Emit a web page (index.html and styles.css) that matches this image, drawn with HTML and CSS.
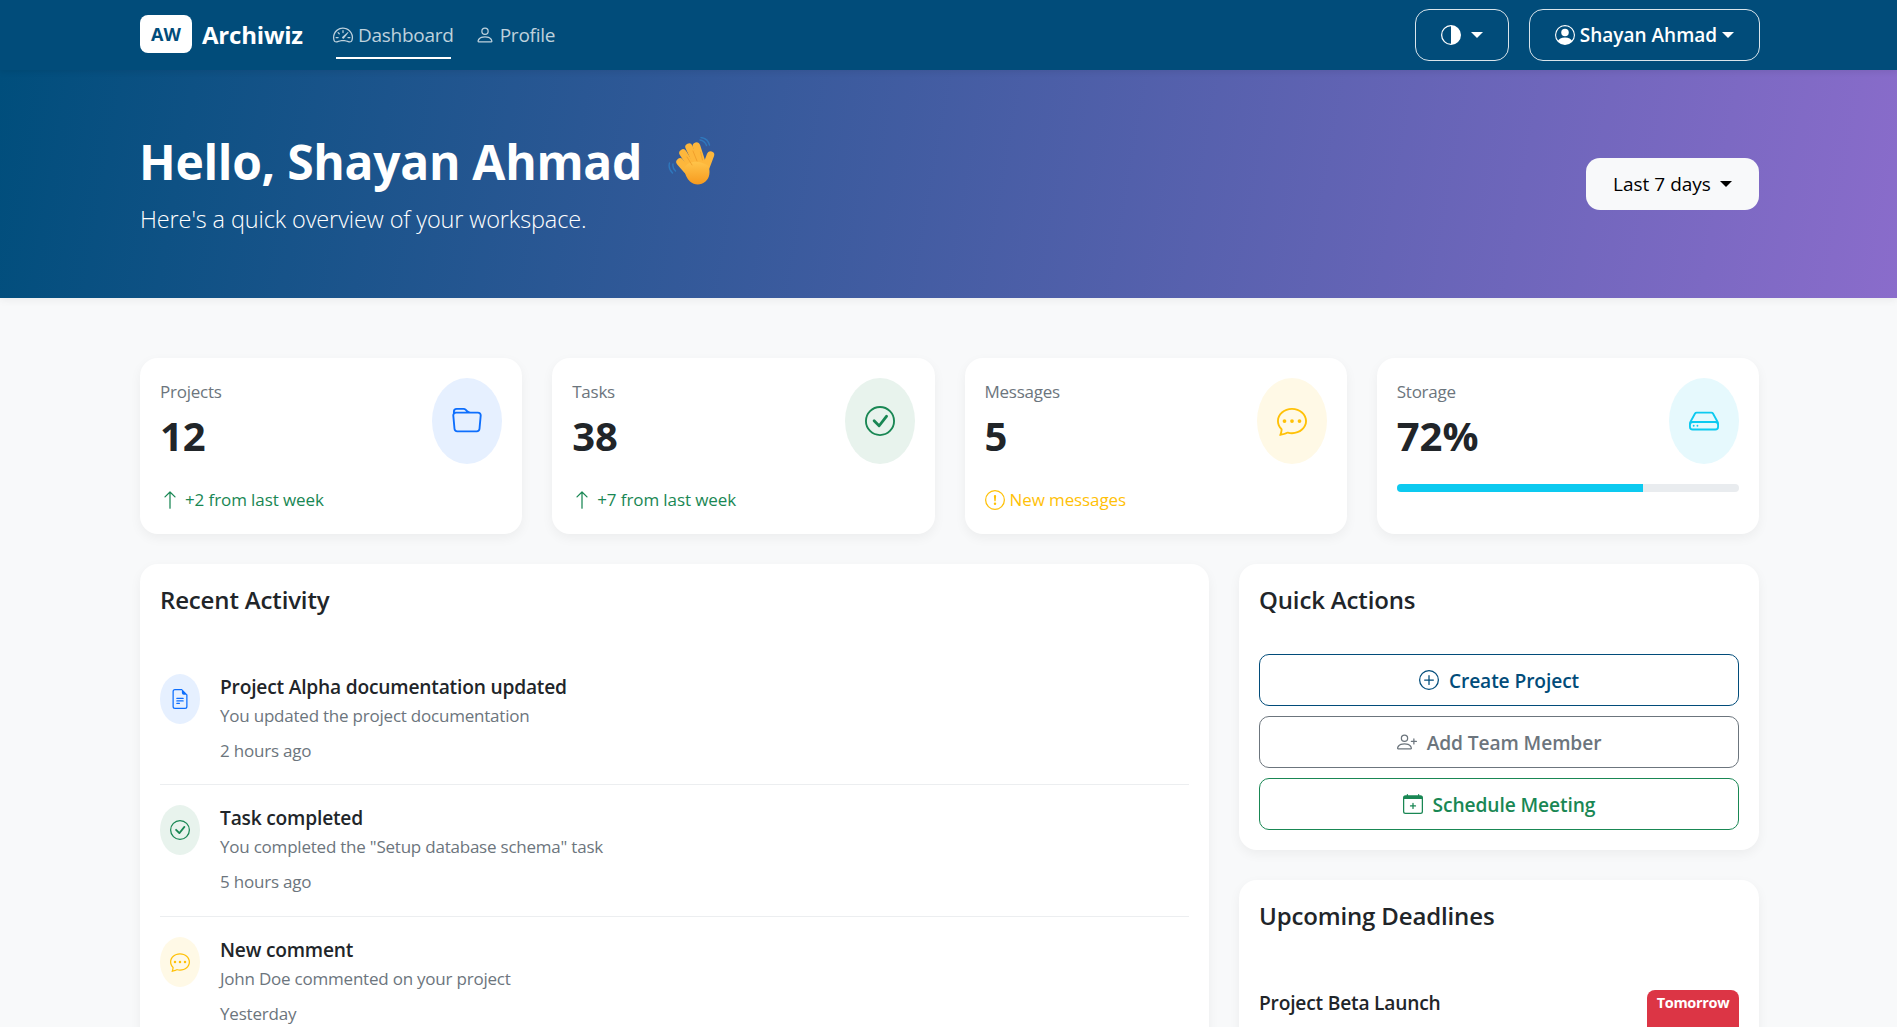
FILE: index.html
```html
<!DOCTYPE html>
<html>
<head>
<meta name="viewport" content="width=device-width, initial-scale=1">
<title>Archiwiz</title>
<link rel="stylesheet" href="styles.css">
</head>
<body>
<div class="page">

  <nav class="topnav">
    <div class="wrap topnav-row">
      <a class="brand" href="#"><span class="logo">AW</span>Archiwiz</a>
      <a class="navlink active" href="#">
        <svg class="ico" viewBox="0 0 16 16"><path d="M8 4a.5.5 0 0 1 .5.5V6a.5.5 0 0 1-1 0V4.5A.5.5 0 0 1 8 4zM3.732 5.732a.5.5 0 0 1 .707 0l.915.914a.5.5 0 1 1-.708.708l-.914-.915a.5.5 0 0 1 0-.707zM2 10a.5.5 0 0 1 .5-.5h1.586a.5.5 0 0 1 0 1H2.5A.5.5 0 0 1 2 10zm9.5 0a.5.5 0 0 1 .5-.5h1.5a.5.5 0 0 1 0 1H12a.5.5 0 0 1-.5-.5zm.754-4.246a.389.389 0 0 0-.527-.02L7.547 9.31a.91.91 0 1 0 1.302 1.258l3.434-4.297a.389.389 0 0 0-.029-.518z"/><path fill-rule="evenodd" d="M0 10a8 8 0 1 1 15.547 2.661c-.442 1.253-1.845 1.602-2.932 1.25C11.309 13.488 9.475 13 8 13c-1.474 0-3.31.488-4.615.911-1.087.352-2.49.003-2.932-1.25A7.988 7.988 0 0 1 0 10zm8-7a7 7 0 0 0-6.603 9.329c.203.575.923.876 1.68.63C4.397 12.533 6.358 12 8 12s3.604.532 4.923.96c.757.245 1.477-.056 1.68-.631A7 7 0 0 0 8 3z"/></svg>
        Dashboard
      </a>
      <a class="navlink" href="#">
        <svg class="ico" viewBox="0 0 16 16"><path d="M8 8a3 3 0 1 0 0-6 3 3 0 0 0 0 6Zm2-3a2 2 0 1 1-4 0 2 2 0 0 1 4 0Zm4 8c0 1-1 1-1 1H3s-1 0-1-1 1-4 6-4 6 3 6 4Zm-1-.004c-.001-.246-.154-.986-.832-1.664C11.516 10.68 10.289 10 8 10c-2.29 0-3.516.68-4.168 1.332-.678.678-.83 1.418-.832 1.664h10Z"/></svg>
        Profile
      </a>
      <button class="navbtn theme-btn">
        <svg class="ico" viewBox="0 0 16 16"><path d="M8 1a7 7 0 0 0 0 14V1zm0-1a8 8 0 1 1 0 16A8 8 0 0 1 8 0z"/></svg>
        <span class="caret"></span>
      </button>
      <button class="navbtn user-btn">
        <svg class="ico" viewBox="0 0 16 16"><path d="M11 6a3 3 0 1 1-6 0 3 3 0 0 1 6 0z"/><path fill-rule="evenodd" d="M0 8a8 8 0 1 1 16 0A8 8 0 0 1 0 8zm8-7a7 7 0 0 0-5.468 11.37C3.242 11.226 4.805 10 8 10s4.757 1.225 5.468 2.37A7 7 0 0 0 8 1z"/></svg>
        Shayan Ahmad
        <span class="caret"></span>
      </button>
    </div>
  </nav>

  <header class="hero">
    <div class="wrap hero-row">
      <div>
        <h1>Hello, Shayan Ahmad
          <!-- waving hand, no emoji font here -->
          <svg class="wave" viewBox="0 0 50 50">
            <defs>
              <linearGradient id="handfill" x1="0" y1="0" x2="0" y2="1">
                <stop offset="0" stop-color="#ffc44a"/>
                <stop offset="1" stop-color="#f79a1e"/>
              </linearGradient>
            </defs>
            <path d="M34 3c3 .5 5.500 2.500 6.500 5.500M35 .5c4 .5 7.500 3.500 8.500 7.500M7 27c-.5 2.500.5 5 2.500 7M3.500 26c-1 3.500 0 7 3 10" fill="none" stroke="#2f78bd" stroke-width="1.400" stroke-linecap="round"/>
            <g fill="none" stroke="#fdb73c" stroke-width="7.400" stroke-linecap="round">
              <path d="M14 25 21 33"/>
              <path d="M17 16 26 30"/>
              <path d="M23 10 31 27"/>
              <path d="M30.500 9 36 26"/>
              <path d="M44.500 18 40 30"/>
            </g>
            <path d="M18 32c2-6 9-8 15-7 4 .5 7 2.500 9.500 4 2 6 1 12-3 15.500-4.500 4-11 4-15.500 0-3-2.700-5-7-6-12.500z" fill="url(#handfill)"/>
            <path d="M21 20 26 28M27 14 31 24M34.500 15 36.500 23" fill="none" stroke="#ee9a28" stroke-width=".8" stroke-linecap="round"/>
          </svg>
        </h1>
        <p class="lead">Here's a quick overview of your workspace.</p>
      </div>
      <button class="range-btn">Last 7 days <span class="caret"></span></button>
    </div>
  </header>

  <main class="wrap content">

    <section class="stats">
      <div class="card stat">
        <div class="stat-top">
          <div>
            <div class="stat-label">Projects</div>
            <div class="stat-num">12</div>
          </div>
          <div class="bubble bubble-lg blue">
            <svg class="ico" viewBox="0 0 16 16"><path d="M.54 3.87.5 3a2 2 0 0 1 2-2h3.672a2 2 0 0 1 1.414.586l.828.828A2 2 0 0 0 9.828 3h3.982a2 2 0 0 1 1.992 2.181l-.637 7A2 2 0 0 1 13.174 14H2.826a2 2 0 0 1-1.991-1.819l-.637-7a1.99 1.99 0 0 1 .342-1.31zM2.19 4a1 1 0 0 0-.996 1.09l.637 7a1 1 0 0 0 .995.91h10.348a1 1 0 0 0 .995-.91l.637-7A1 1 0 0 0 13.81 4H2.19zm4.69-1.707A1 1 0 0 0 6.172 2H2.5a1 1 0 0 0-1 .981l.006.139C1.72 3.042 1.95 3 2.19 3h5.396l-.707-.707z"/></svg>
          </div>
        </div>
        <div class="stat-note green-text">
          <svg class="ico" viewBox="0 0 16 16"><path fill-rule="evenodd" d="M8 15a.5.5 0 0 0 .5-.5V2.707l3.146 3.147a.5.5 0 0 0 .708-.708l-4-4a.5.5 0 0 0-.708 0l-4 4a.5.5 0 1 0 .708.708L7.5 2.707V14.5a.5.5 0 0 0 .5.5z"/></svg>
          +2 from last week
        </div>
      </div>

      <div class="card stat">
        <div class="stat-top">
          <div>
            <div class="stat-label">Tasks</div>
            <div class="stat-num">38</div>
          </div>
          <div class="bubble bubble-lg green">
            <svg class="ico" viewBox="0 0 16 16"><path d="M8 15A7 7 0 1 1 8 1a7 7 0 0 1 0 14zm0 1A8 8 0 1 0 8 0a8 8 0 0 0 0 16z"/><path d="M10.97 4.97a.235.235 0 0 0-.02.022L7.477 9.417 5.384 7.323a.75.75 0 0 0-1.06 1.06L6.97 11.03a.75.75 0 0 0 1.079-.02l3.992-4.99a.75.75 0 0 0-1.071-1.05z"/></svg>
          </div>
        </div>
        <div class="stat-note green-text">
          <svg class="ico" viewBox="0 0 16 16"><path fill-rule="evenodd" d="M8 15a.5.5 0 0 0 .5-.5V2.707l3.146 3.147a.5.5 0 0 0 .708-.708l-4-4a.5.5 0 0 0-.708 0l-4 4a.5.5 0 1 0 .708.708L7.5 2.707V14.5a.5.5 0 0 0 .5.5z"/></svg>
          +7 from last week
        </div>
      </div>

      <div class="card stat">
        <div class="stat-top">
          <div>
            <div class="stat-label">Messages</div>
            <div class="stat-num">5</div>
          </div>
          <div class="bubble bubble-lg yellow">
            <svg class="ico" viewBox="0 0 16 16"><path d="M5 8a1 1 0 1 1-2 0 1 1 0 0 1 2 0zm4 0a1 1 0 1 1-2 0 1 1 0 0 1 2 0zm3 1a1 1 0 1 0 0-2 1 1 0 0 0 0 2z"/><path d="m2.165 15.803.02-.004c1.83-.363 2.948-.842 3.468-1.105A9.06 9.06 0 0 0 8 15c4.418 0 8-3.134 8-7s-3.582-7-8-7-8 3.134-8 7c0 1.76.743 3.37 1.97 4.6a10.437 10.437 0 0 1-.524 2.318l-.003.011a10.722 10.722 0 0 1-.244.637c-.079.186.074.394.273.362a21.673 21.673 0 0 0 .693-.125zm.8-3.108a1 1 0 0 0-.287-.801C1.618 10.83 1 9.468 1 8c0-3.192 3.004-6 7-6s7 2.808 7 6c0 3.193-3.004 6-7 6a8.06 8.06 0 0 1-2.088-.272 1 1 0 0 0-.711.074c-.387.196-1.24.57-2.634.893a10.97 10.97 0 0 0 .398-2z"/></svg>
          </div>
        </div>
        <div class="stat-note yellow-text">
          <svg class="ico" viewBox="0 0 16 16"><path d="M8 15A7 7 0 1 1 8 1a7 7 0 0 1 0 14zm0 1A8 8 0 1 0 8 0a8 8 0 0 0 0 16z"/><path d="M7.002 11a1 1 0 1 1 2 0 1 1 0 0 1-2 0zM7.1 4.995a.905.905 0 1 1 1.8 0l-.35 3.507a.552.552 0 0 1-1.1 0L7.1 4.995z"/></svg>
          New messages
        </div>
      </div>

      <div class="card stat">
        <div class="stat-top">
          <div>
            <div class="stat-label">Storage</div>
            <div class="stat-num">72%</div>
          </div>
          <div class="bubble bubble-lg cyan">
            <svg class="ico" viewBox="0 0 16 16"><path d="M4.500 11a.5.5 0 1 0 0-1 .5.5 0 0 0 0 1zM3 10.500a.5.5 0 1 1-1 0 .5.5 0 0 1 1 0z"/><path d="M16 11a2 2 0 0 1-2 2H2a2 2 0 0 1-2-2V9.510c0-.418.105-.83.305-1.197l2.472-4.531A1.500 1.500 0 0 1 4.094 3h7.812a1.500 1.500 0 0 1 1.317.782l2.472 4.530c.2.368.305.78.305 1.198V11zM3.655 4.260 1.592 8.043C1.724 8.014 1.860 8 2 8h12c.14 0 .276.014.408.042L12.345 4.260a.5.5 0 0 0-.439-.26H4.094a.5.5 0 0 0-.44.26zM1 10v1a1 1 0 0 0 1 1h12a1 1 0 0 0 1-1v-1a1 1 0 0 0-1-1H2a1 1 0 0 0-1 1z"/></svg>
          </div>
        </div>
        <div class="progress"><div class="progress-bar" style="width: 72%"></div></div>
      </div>
    </section>

    <section class="columns">
      <div class="card panel">
        <h2>Recent Activity</h2>
        <div class="activity">
          <div class="act-item">
            <div class="bubble blue">
              <svg class="ico" viewBox="0 0 16 16"><path d="M5.500 7a.5.5 0 0 0 0 1h5a.5.5 0 0 0 0-1h-5zM5 9.500a.5.5 0 0 1 .5-.5h5a.5.5 0 0 1 0 1h-5a.5.5 0 0 1-.5-.5zm0 2a.5.5 0 0 1 .5-.5h2a.5.5 0 0 1 0 1h-2a.5.5 0 0 1-.5-.5z"/><path d="M9.500 0H4a2 2 0 0 0-2 2v12a2 2 0 0 0 2 2h8a2 2 0 0 0 2-2V4.500L9.500 0zm0 1v2A1.500 1.500 0 0 0 11 4.500h2V14a1 1 0 0 1-1 1H4a1 1 0 0 1-1-1V2a1 1 0 0 1 1-1h5.500z"/></svg>
            </div>
            <div>
              <div class="act-title">Project Alpha documentation updated</div>
              <div class="act-sub">You updated the project documentation</div>
              <div class="act-time">2 hours ago</div>
            </div>
          </div>
          <div class="act-item">
            <div class="bubble green">
              <svg class="ico" viewBox="0 0 16 16"><path d="M8 15A7 7 0 1 1 8 1a7 7 0 0 1 0 14zm0 1A8 8 0 1 0 8 0a8 8 0 0 0 0 16z"/><path d="M10.97 4.97a.235.235 0 0 0-.02.022L7.477 9.417 5.384 7.323a.75.75 0 0 0-1.06 1.06L6.97 11.03a.75.75 0 0 0 1.079-.02l3.992-4.99a.75.75 0 0 0-1.071-1.05z"/></svg>
            </div>
            <div>
              <div class="act-title">Task completed</div>
              <div class="act-sub">You completed the "Setup database schema" task</div>
              <div class="act-time">5 hours ago</div>
            </div>
          </div>
          <div class="act-item">
            <div class="bubble yellow">
              <svg class="ico" viewBox="0 0 16 16"><path d="M5 8a1 1 0 1 1-2 0 1 1 0 0 1 2 0zm4 0a1 1 0 1 1-2 0 1 1 0 0 1 2 0zm3 1a1 1 0 1 0 0-2 1 1 0 0 0 0 2z"/><path d="m2.165 15.803.02-.004c1.83-.363 2.948-.842 3.468-1.105A9.06 9.06 0 0 0 8 15c4.418 0 8-3.134 8-7s-3.582-7-8-7-8 3.134-8 7c0 1.76.743 3.37 1.97 4.6a10.437 10.437 0 0 1-.524 2.318l-.003.011a10.722 10.722 0 0 1-.244.637c-.079.186.074.394.273.362a21.673 21.673 0 0 0 .693-.125zm.8-3.108a1 1 0 0 0-.287-.801C1.618 10.83 1 9.468 1 8c0-3.192 3.004-6 7-6s7 2.808 7 6c0 3.193-3.004 6-7 6a8.06 8.06 0 0 1-2.088-.272 1 1 0 0 0-.711.074c-.387.196-1.24.57-2.634.893a10.97 10.97 0 0 0 .398-2z"/></svg>
            </div>
            <div>
              <div class="act-title">New comment</div>
              <div class="act-sub">John Doe commented on your project</div>
              <div class="act-time">Yesterday</div>
            </div>
          </div>
        </div>
      </div>

      <div class="side">
        <div class="card panel">
          <h2>Quick Actions</h2>
          <div class="actions">
            <button class="action action-primary">
              <svg class="ico" viewBox="0 0 16 16"><path d="M8 15A7 7 0 1 1 8 1a7 7 0 0 1 0 14zm0 1A8 8 0 1 0 8 0a8 8 0 0 0 0 16z"/><path d="M8 4a.5.5 0 0 1 .5.5v3h3a.5.5 0 0 1 0 1h-3v3a.5.5 0 0 1-1 0v-3h-3a.5.5 0 0 1 0-1h3v-3A.5.5 0 0 1 8 4z"/></svg>
              Create Project
            </button>
            <button class="action action-grey">
              <svg class="ico" viewBox="0 0 16 16"><path d="M6 8a3 3 0 1 0 0-6 3 3 0 0 0 0 6zm2-3a2 2 0 1 1-4 0 2 2 0 0 1 4 0zm4 8c0 1-1 1-1 1H1s-1 0-1-1 1-4 6-4 6 3 6 4zm-1-.004c-.001-.246-.154-.986-.832-1.664C9.516 10.680 8.289 10 6 10c-2.290 0-3.516.68-4.168 1.332-.678.678-.83 1.418-.832 1.664h10z"/><path fill-rule="evenodd" d="M13.500 5a.5.5 0 0 1 .5.5V7h1.500a.5.5 0 0 1 0 1H14v1.500a.5.5 0 0 1-1 0V8h-1.500a.5.5 0 0 1 0-1H13V5.500a.5.5 0 0 1 .5-.5z"/></svg>
              Add Team Member
            </button>
            <button class="action action-green">
              <svg class="ico" viewBox="0 0 16 16"><path d="M8 7a.5.5 0 0 1 .5.5V9H10a.5.5 0 0 1 0 1H8.500v1.500a.5.5 0 0 1-1 0V10H6a.5.5 0 0 1 0-1h1.500V7.500A.5.5 0 0 1 8 7z"/><path d="M3.500 0a.5.5 0 0 1 .5.5V1h8V.5a.5.5 0 0 1 1 0V1h1a2 2 0 0 1 2 2v11a2 2 0 0 1-2 2H2a2 2 0 0 1-2-2V3a2 2 0 0 1 2-2h1V.5a.5.5 0 0 1 .5-.5zM1 4v10a1 1 0 0 0 1 1h12a1 1 0 0 0 1-1V4H1z"/></svg>
              Schedule Meeting
            </button>
          </div>
        </div>

        <div class="card panel">
          <h2>Upcoming Deadlines</h2>
          <div class="deadline">
            <div class="deadline-name">Project Beta Launch</div>
            <span class="badge">Tomorrow</span>
          </div>
        </div>
      </div>
    </section>
  </main>
</div>
</body>
</html>
```

FILE: styles.css
```css
* {
  box-sizing: border-box;
}

html, body {
  margin: 0;
  padding: 0;
}

body {
  font-family: "Open Sans", "Noto Sans", "Liberation Sans", sans-serif;
  font-size: 16px;
  color: #212529;
  background: #f8f9fa;
}

.page {
  height: 100vh;
  overflow: hidden;
}

.wrap {
  width: 1619px;
  margin-left: 140px;
}

.ico {
  width: 1em;
  height: 1em;
  fill: currentColor;
  flex: none;
}

.caret {
  display: inline-block;
  border-top: 6px solid currentColor;
  border-left: 6px solid transparent;
  border-right: 6px solid transparent;
}

a {
  text-decoration: none;
}

button {
  font-family: inherit;
  cursor: pointer;
}

/* top nav */
.topnav {
  background: #014c7a;
  height: 70px;
  position: relative;
  z-index: 1;
  box-shadow: 0 2px 6px rgba(0, 0, 0, .08);
}

.topnav-row {
  display: flex;
  align-items: center;
  height: 70px;
}

.brand {
  display: flex;
  align-items: center;
  gap: 10px;
  color: #fff;
  font-size: 24px;
  font-weight: 700;
  letter-spacing: -.2px;
  margin-right: 28px;
  padding-bottom: 2px;
}

.logo {
  width: 52px;
  height: 38px;
  background: #fff;
  color: #014c7a;
  border-radius: 8px;
  font-size: 18px;
  letter-spacing: 0;
  display: flex;
  align-items: center;
  justify-content: center;
}

.navlink {
  display: flex;
  align-items: center;
  gap: 5px;
  height: 70px;
  padding: 0 2px 1px;
  margin-right: 17px;
  color: rgba(255, 255, 255, .75);
  font-size: 19px;
  letter-spacing: -.25px;
  position: relative;
}

.navlink .ico {
  font-size: 20px;
}

.navlink.active::after {
  content: "";
  position: absolute;
  left: 5px;
  right: 5px;
  bottom: 11px;
  height: 2px;
  background: #fff;
}

.navbtn {
  height: 52px;
  background: transparent;
  border: 1px solid rgba(255, 255, 255, .85);
  border-radius: 14px;
  color: #fff;
  display: flex;
  align-items: center;
  justify-content: center;
  padding: 0 0 1px;
}

.navbtn .ico {
  font-size: 20px;
}

.theme-btn {
  width: 94px;
  gap: 10px;
  margin-left: auto;
}

.user-btn {
  width: 231px;
  gap: 5px;
  margin-left: 20px;
  margin-right: -1px;
  font-size: 19px;
  font-weight: 600;
}

/* hero */
.hero {
  height: 228px;
  color: #fff;
  background: linear-gradient(100deg, #004e7c 0%, #8a6ccb 100%);
  box-shadow: 0 2px 8px rgba(0, 0, 0, .06);
}

.hero-row {
  display: flex;
  align-items: center;
  justify-content: space-between;
  height: 228px;
}

.hero h1 {
  margin: 0 0 13px -1px;
  font-size: 48px;
  font-weight: 700;
  letter-spacing: -.3px;
  line-height: 1.2;
  display: flex;
  align-items: center;
  gap: 24px;
}

.wave {
  width: 50px;
  height: 50px;
}

.lead {
  margin: 0;
  font-size: 23.5px;
  font-weight: 300;
  letter-spacing: -.12px;
  line-height: 32px;
}

.range-btn {
  width: 173px;
  height: 52px;
  background: #f8f9fa;
  border: 0;
  border-radius: 14px;
  color: #000;
  font-size: 19px;
  font-weight: 500;
  display: flex;
  align-items: center;
  justify-content: center;
  gap: 9px;
  padding: 0;
}

/* cards */
.card {
  background: #fff;
  border-radius: 18px;
  box-shadow: 0 4px 12px rgba(0, 0, 0, .05);
}

.content {
  padding-top: 60px;
}

.stats {
  display: grid;
  grid-template-columns: repeat(4, 1fr);
  gap: 30px;
}

.stat {
  height: 176px;
  padding: 20px;
  display: flex;
  flex-direction: column;
}

.stat-top {
  display: flex;
  justify-content: space-between;
  height: 86px;
}

.stat-label {
  color: #6c757d;
  font-size: 17px;
  letter-spacing: -.25px;
  line-height: 28px;
}

.stat-num {
  font-size: 40px;
  font-weight: 700;
  line-height: 48px;
  margin-top: 6px;
}

.stat-note {
  margin-top: 24px;
  display: flex;
  align-items: center;
  gap: 5px;
  font-size: 17px;
  letter-spacing: -.1px;
  line-height: 24px;
}

.stat-note .ico {
  font-size: 20px;
}

.green-text {
  color: #198754;
}

.yellow-text {
  color: #ffc107;
}

.bubble {
  width: 40px;
  height: 50px;
  border-radius: 50%;
  flex: none;
  display: flex;
  align-items: center;
  justify-content: center;
  font-size: 20px;
}

.bubble-lg {
  width: 70px;
  height: 86px;
  font-size: 30px;
}

.blue {
  background: #e6f0ff;
  color: #0d6efd;
}

.green {
  background: #e8f3ed;
  color: #198754;
}

.yellow {
  background: #fff9e6;
  color: #ffc107;
}

.cyan {
  background: #e6f9fd;
  color: #0dcaf0;
}

.progress {
  margin-top: 20px;
  height: 8px;
  border-radius: 4px;
  background: #e9ecef;
  overflow: hidden;
}

.progress-bar {
  height: 100%;
  background: #0dcaf0;
}

/* lower columns */
.columns {
  display: grid;
  grid-template-columns: 1069px 520px;
  gap: 30px;
  margin-top: 30px;
  align-items: start;
}

.side {
  display: flex;
  flex-direction: column;
  gap: 30px;
}

.panel {
  padding: 20px;
}

.panel h2 {
  margin: 0;
  font-size: 24px;
  font-weight: 600;
  letter-spacing: -.15px;
  line-height: 32px;
}

.activity {
  margin-top: 58px;
}

.act-item {
  display: flex;
  gap: 20px;
  height: 131.500px;
  padding-top: 20px;
  border-bottom: 1px solid #eceef0;
}

.activity .act-item:first-child {
  height: 111px;
  padding-top: 0;
}

.act-title {
  font-size: 19.2px;
  font-weight: 600;
  letter-spacing: -.2px;
  line-height: 26px;
}

.act-sub {
  color: #6c757d;
  font-size: 17px;
  letter-spacing: -.22px;
  line-height: 24px;
  margin-top: 4px;
}

.act-time {
  color: #6c757d;
  font-size: 17px;
  letter-spacing: -.2px;
  line-height: 24px;
  margin-top: 11px;
}

.actions {
  margin-top: 38px;
  display: flex;
  flex-direction: column;
  gap: 10px;
}

.action {
  height: 52px;
  background: #fff;
  border: 1px solid;
  border-radius: 10px;
  font-size: 19.2px;
  font-weight: 600;
  letter-spacing: -.1px;
  display: flex;
  align-items: center;
  justify-content: center;
  gap: 10px;
}

.action .ico {
  font-size: 20px;
}

.action-primary {
  color: #014c7a;
  border-color: #014c7a;
}

.action-grey {
  color: #6c757d;
  border-color: #6c757d;
}

.action-green {
  color: #198754;
  border-color: #198754;
}

.deadline {
  margin-top: 58px;
  display: flex;
  justify-content: space-between;
  min-height: 70px;
}

.deadline-name {
  font-size: 19.2px;
  font-weight: 600;
  letter-spacing: -.2px;
  line-height: 26px;
}

.badge {
  width: 92px;
  background: #dc3545;
  color: #fff;
  border-radius: 8px;
  font-size: 14.5px;
  font-weight: 700;
  letter-spacing: -.3px;
  text-align: center;
  padding-top: 3px;
}
```
